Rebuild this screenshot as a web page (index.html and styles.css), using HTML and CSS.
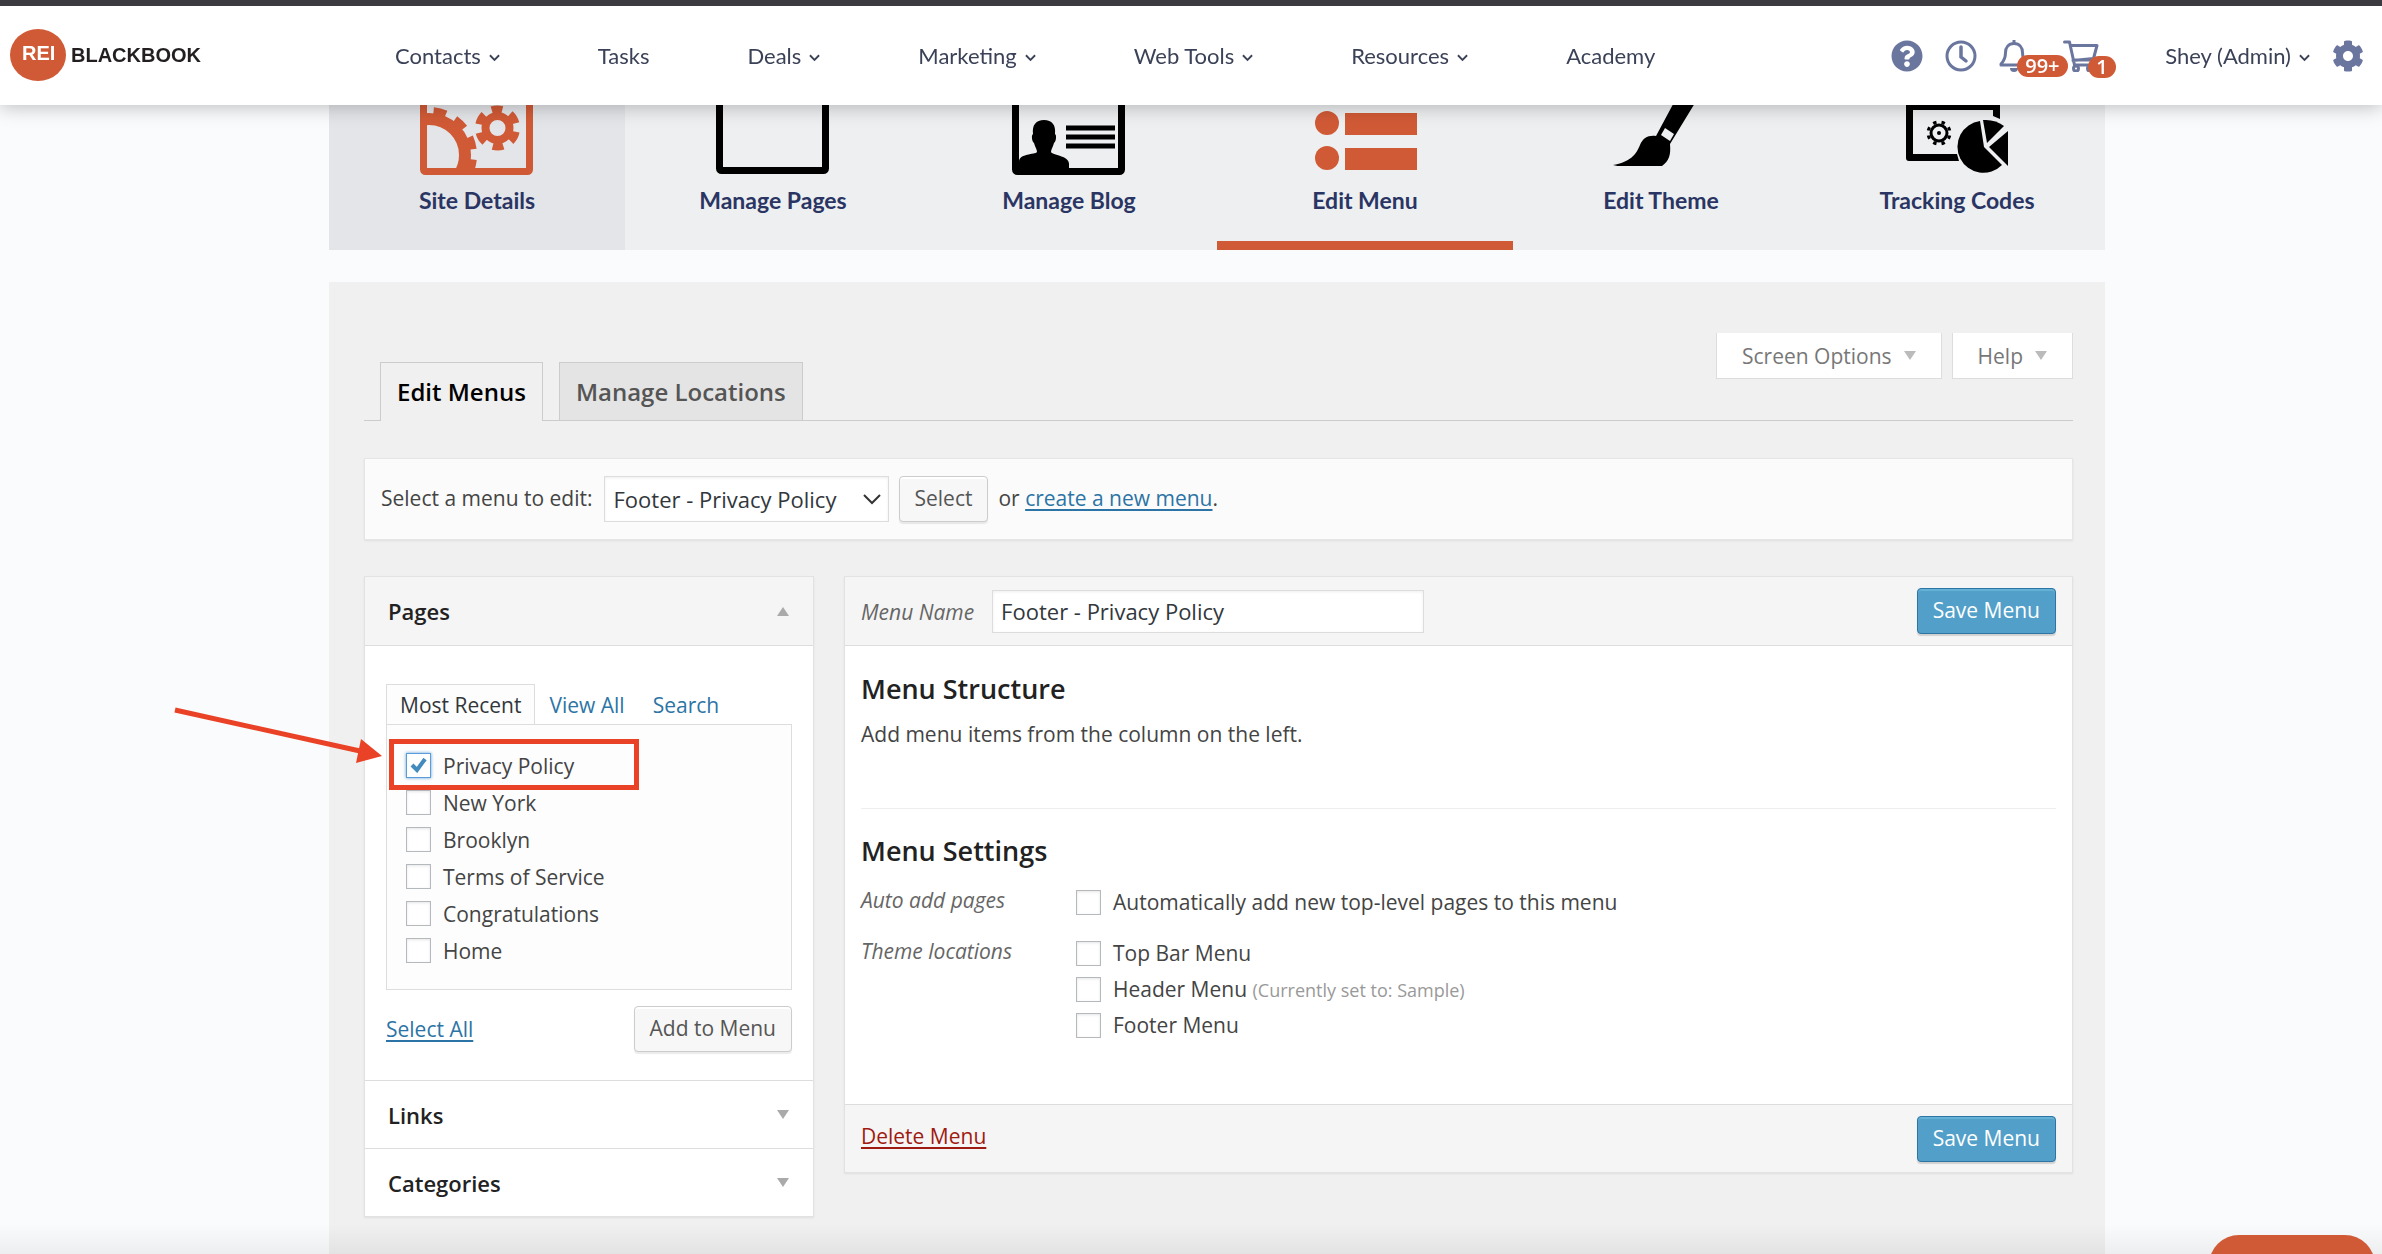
FILE: index.html
```html
<!DOCTYPE html>
<html lang="en">
<head>
<meta charset="utf-8">
<title>Edit Menus - REI BlackBook</title>
<link rel="stylesheet" href="styles.css">
</head>
<body>
<header class="topbar">
  <a class="logo" href="#"><span class="logo-mark">REI</span><span>BLACKBOOK</span></a>
  <nav class="main-nav">
    <a href="#">Contacts <svg class="chev" viewBox="0 0 12 8"><path d="M1 1l5 5 5-5"/></svg></a>
    <a href="#">Tasks</a>
    <a href="#">Deals <svg class="chev" viewBox="0 0 12 8"><path d="M1 1l5 5 5-5"/></svg></a>
    <a href="#">Marketing <svg class="chev" viewBox="0 0 12 8"><path d="M1 1l5 5 5-5"/></svg></a>
    <a href="#">Web Tools <svg class="chev" viewBox="0 0 12 8"><path d="M1 1l5 5 5-5"/></svg></a>
    <a href="#">Resources <svg class="chev" viewBox="0 0 12 8"><path d="M1 1l5 5 5-5"/></svg></a>
    <a href="#">Academy</a>
  </nav>
  <div class="tools">
    <a class="tool" href="#" aria-label="Help"><svg width="32" height="32" viewBox="0 0 512 512"><path fill="#6b769f" d="M504 256c0 137-111 248-248 248S8 393 8 256 119 8 256 8s248 111 248 248zM262.700 90c-54.500 0-89.300 23-116.500 63.800-3.500 5.300-2.400 12.400 2.700 16.300l34.700 26.300c5.200 3.900 12.600 3 16.700-2.100 17.900-22.700 30.100-35.800 57.300-35.800 20.400 0 45.700 13.100 45.700 33 0 15-12.400 22.700-32.500 34C247.100 238.500 216 254.900 216 296v4c0 6.600 5.400 12 12 12h56c6.600 0 12-5.400 12-12v-1.300c0-28.500 83.200-29.600 83.200-106.700 0-58-60.200-102-116.500-102zM256 338c-25.400 0-46 20.600-46 46s20.600 46 46 46 46-20.600 46-46-20.600-46-46-46z"/></svg></a>
    <a class="tool" href="#" aria-label="History"><svg width="32" height="32" viewBox="0 0 32 32" fill="none" stroke="#6b769f"><circle cx="16" cy="16" r="14" stroke-width="3"/><path d="M16 7v10l5 4" stroke-width="3.500" stroke-linecap="round"/></svg></a>
    <a class="tool bell" href="#" aria-label="Notifications"><svg width="30" height="32" viewBox="0 0 30 32"><path d="M15 3.500c-5.500 0-8.500 4-8.500 9 0 6-1.500 8.500-4.500 11.500v1h26v-1c-3-3-4.500-5.500-4.500-11.500 0-5-3-9-8.500-9z" fill="none" stroke="#6b769f" stroke-width="3" stroke-linejoin="round"/><path d="M15 0v4" stroke="#6b769f" stroke-width="3"/><path d="M11 28h8a4 4 0 0 1-8 0z" fill="#6b769f"/></svg><span class="badge">99+</span></a>
    <a class="tool cart" href="#" aria-label="Cart"><svg width="36" height="32" viewBox="0 0 36 32" fill="none" stroke="#6b769f" stroke-width="3" stroke-linecap="round" stroke-linejoin="round"><path d="M1.500 2h5l5 23h18M8 5.500h26l-3.500 13-20.500 2M10 20h20"/><circle cx="13" cy="28.500" r="2.500"/><circle cx="27" cy="28.500" r="2.500"/></svg><span class="badge">1</span></a>
    <a class="user" href="#">Shey (Admin) <svg class="chev" viewBox="0 0 12 8"><path d="M1 1l5 5 5-5"/></svg></a>
    <a class="tool" href="#" aria-label="Settings"><svg width="32" height="32" viewBox="0 0 512 512"><path fill="#6b769f" d="M487.400 315.700l-42.600-24.600c4.300-23.200 4.300-47 0-70.200l42.600-24.600c4.900-2.800 7.100-8.600 5.500-14-11.100-35.600-30-67.800-54.700-94.600-3.800-4.100-10-5.100-14.800-2.300L380.800 110c-17.900-15.400-38.500-27.300-60.800-35.100V25.800c0-5.600-3.900-10.500-9.400-11.700-36.700-8.200-74.300-7.800-109.200 0-5.500 1.200-9.400 6.100-9.400 11.700V75c-22.200 7.900-42.800 19.800-60.800 35.100L88.700 85.500c-4.900-2.800-11-1.900-14.800 2.300-24.700 26.700-43.600 58.900-54.700 94.600-1.700 5.400.6 11.200 5.500 14L67.300 221c-4.300 23.200-4.300 47 0 70.200l-42.600 24.600c-4.900 2.800-7.100 8.600-5.500 14 11.100 35.600 30 67.800 54.700 94.600 3.800 4.100 10 5.100 14.800 2.300l42.600-24.600c17.900 15.400 38.500 27.300 60.800 35.100v49.200c0 5.600 3.900 10.500 9.400 11.700 36.700 8.200 74.300 7.800 109.200 0 5.500-1.200 9.400-6.100 9.400-11.700v-49.200c22.200-7.900 42.800-19.800 60.800-35.100l42.600 24.600c4.900 2.800 11 1.900 14.800-2.300 24.700-26.700 43.600-58.900 54.700-94.600 1.500-5.500-.7-11.300-5.600-14.100zM256 336c-44.100 0-80-35.900-80-80s35.900-80 80-80 80 35.900 80 80-35.900 80-80 80z"/></svg></a>
  </div>
</header>

<main class="page">
  <nav class="tiles">
    <a class="tile tile-hover" href="#">
      <svg width="114" height="100" viewBox="0 0 114 100" fill="none" stroke="#d15a36">
        <clipPath id="frame"><path d="M4 4h105v92H4z"/></clipPath>
        <rect x="3.500" y="3.500" width="106" height="92" rx="2" stroke-width="7"/>
        <g clip-path="url(#frame)"><circle cx="9" cy="79" r="36" stroke-width="12"/><circle cx="9" cy="79" r="44" stroke-width="8" pathLength="240" stroke-dasharray="11 9" stroke-dashoffset="-4"/></g>
        <circle cx="77.500" cy="52" r="12" stroke-width="8"/><circle cx="77.500" cy="52" r="18.500" stroke-width="8" pathLength="120" stroke-dasharray="11 9" stroke-dashoffset="-4"/>
      </svg>
      <span>Site Details</span></a>
    <a class="tile" href="#">
      <svg width="114" height="100" viewBox="0 0 114 100" fill="none" stroke="#000"><rect x="3.500" y="3.500" width="106" height="91" rx="2" stroke-width="7"/></svg>
      <span>Manage Pages</span></a>
    <a class="tile" href="#">
      <svg width="114" height="100" viewBox="0 0 114 100"><rect x="3.500" y="3.500" width="106" height="92" rx="2" fill="none" stroke="#000" stroke-width="7"/><path d="M32 44c8 0 12 5 11 14 2 1 1 8-1 9-1 4-3 6-3 9 2 4 20 3 18 14v4H7V86c0-9 16-7 18-10 0-3-2-5-3-9-2-1-3-8-1-9-1-9 3-14 11-14z"/><path d="M54 52h49M54 61h49M54 70h49" stroke="#000" stroke-width="5"/></svg>
      <span>Manage Blog</span></a>
    <a class="tile tile-current" href="#">
      <svg width="114" height="100" viewBox="0 0 114 100" fill="#d15a36"><circle cx="19" cy="11" r="12"/><circle cx="19" cy="47" r="12"/><circle cx="19" cy="82" r="12"/><path d="M37 0h72v22H37zM37 37h72v22H37zM37 72h72v22H37z"/></svg>
      <span>Edit Menu</span></a>
    <a class="tile" href="#">
      <svg width="114" height="100" viewBox="0 0 114 100"><path d="M82 4L52 60c-8-1-13 2-16 9-4 10-10 17-27 20 3 1 6 1 9 1h40c7-5 9-11 8-22L105 4z"/><path d="M61 52l9 6-4 7-9-6z" fill="#edeff1"/></svg>
      <span>Edit Theme</span></a>
    <a class="tile" href="#">
      <svg width="114" height="100" viewBox="0 0 114 100"><path d="M6 0h94v43l-7-3V34H13v44h44l2 7H9q-3 0-3-3z"/><circle cx="39" cy="57" r="8" fill="none" stroke="#000" stroke-width="3"/><circle cx="39" cy="57" r="11" fill="none" stroke="#000" stroke-width="3" pathLength="80" stroke-dasharray="4 6" stroke-dashoffset="-3"/><circle cx="39" cy="57" r="2"/><path d="M80 45l4 26 18 18A26 26 0 1 1 80 45z"/><path d="M83 44q12-1 21 6L87 67z"/><path d="M108 55v35L89 71z"/></svg>
      <span>Tracking Codes</span></a>
  </nav>

  <section class="panel">
    <div class="meta-links">
      <button class="meta" type="button">Screen Options <i class="tri down"></i></button>
      <button class="meta" type="button">Help <i class="tri down"></i></button>
    </div>
    <nav class="tabs">
      <a class="tab tab-active" href="#">Edit Menus</a>
      <a class="tab" href="#">Manage Locations</a>
    </nav>

    <form class="chooser">
      <label for="menu-select">Select a menu to edit:</label>
      <select id="menu-select"><option>Footer - Privacy Policy</option></select>
      <button class="btn" type="button">Select</button>
      <span class="or">or <a href="#">create a new menu</a>.</span>
    </form>

    <div class="columns">
      <aside class="box accordion">
        <h3 class="acc-head acc-open">Pages <i class="tri up"></i></h3>
        <div class="acc-body">
          <div class="subtabs">
            <a class="subtab subtab-active" href="#">Most Recent</a>
            <a class="subtab" href="#">View All</a>
            <a class="subtab" href="#">Search</a>
          </div>
          <div class="page-list">
            <div class="first-page">
              <label class="check"><input type="checkbox" checked> Privacy Policy</label>
              <span class="highlight"></span>
              <svg class="arrow" width="210" height="58" viewBox="0 0 210 58"><path d="M1 3L186 44" stroke="#ea4226" stroke-width="5"/><path d="M187 32l21 17-26 7z" fill="#ea4226"/></svg>
            </div>
            <label class="check"><input type="checkbox"> New York</label>
            <label class="check"><input type="checkbox"> Brooklyn</label>
            <label class="check"><input type="checkbox"> Terms of Service</label>
            <label class="check"><input type="checkbox"> Congratulations</label>
            <label class="check"><input type="checkbox"> Home</label>
          </div>
          <div class="list-actions">
            <a href="#">Select All</a>
            <button class="btn" type="button">Add to Menu</button>
          </div>
        </div>
        <h3 class="acc-head">Links <i class="tri down"></i></h3>
        <h3 class="acc-head">Categories <i class="tri down"></i></h3>
      </aside>

      <form class="box editor">
        <div class="editor-bar">
          <label class="hint" for="menu-name">Menu Name</label>
          <input class="name" id="menu-name" type="text" value="Footer - Privacy Policy">
          <button class="btn primary" type="button">Save Menu</button>
        </div>
        <div class="editor-body">
          <h2>Menu Structure</h2>
          <p>Add menu items from the column on the left.</p>
          <hr>
          <h2>Menu Settings</h2>
          <div class="setting">
            <span class="hint">Auto add pages</span>
            <div><label class="check"><input type="checkbox"> Automatically add new top-level pages to this menu</label></div>
          </div>
          <div class="setting">
            <span class="hint">Theme locations</span>
            <div>
              <label class="check"><input type="checkbox"> Top Bar Menu</label>
              <label class="check"><input type="checkbox"> <span>Header Menu <small>(Currently set to: Sample)</small></span></label>
              <label class="check"><input type="checkbox"> Footer Menu</label>
            </div>
          </div>
        </div>
        <div class="editor-bar editor-foot">
          <a class="delete" href="#">Delete Menu</a>
          <button class="btn primary" type="button">Save Menu</button>
        </div>
      </form>
    </div>
  </section>
</main>
<div class="fade"></div>
<button class="chat" type="button" aria-label="Chat"></button>
</body>
</html>
```
FILE: styles.css
```css
* { box-sizing: border-box; }
body {
  margin: 0;
  background: #fafbfd;
  color: #444;
  font: 21px/28px "Open Sans", sans-serif;
}
button, input, select { font: inherit; color: inherit; margin: 0; }
svg { display: block; flex: none; }
a { color: #2c74a5; text-underline-offset: 3px; text-decoration-thickness: 2px; }
h2, h3, p { margin: 0; }

/* Header */
.topbar {
  position: fixed;
  inset: 0 0 auto 0;
  z-index: 5;
  height: 105px;
  padding: 0 18px 0 10px;
  display: flex;
  align-items: center;
  background: #fff;
  border-top: 6px solid #3b3a41;
  box-shadow: 0 2px 18px rgba(0, 0, 0, .25);
  font: 22px/28px Lato, sans-serif;
}
.topbar a { color: #3b4257; text-decoration: none; }
.topbar .logo {
  display: flex;
  align-items: center;
  gap: 5px;
  width: 385px;
  padding-bottom: 2px;
  color: #231f20;
  font: bold 20px/26px "Liberation Sans", sans-serif;
}
.logo-mark {
  width: 56px;
  height: 52px;
  padding-left: 12px;
  border-radius: 50%;
  background: #d15a36;
  color: #fff;
  line-height: 48px;
}
.logo { line-height: 22px; }
.main-nav { display: flex; gap: 98px; }
.main-nav a, .user { display: flex; align-items: center; gap: 8px; white-space: nowrap; }
.chev { width: 11px; height: 8px; margin-top: 4px; fill: none; stroke: #3b4257; stroke-width: 2; }
.tools { display: flex; align-items: center; gap: 22px; margin-left: auto; }
.tool { position: relative; }
.cart { margin-left: 12px; }
.user { margin: 0 0 0 44px; }
.badge {
  position: absolute;
  left: 18px;
  top: 15px;
  padding: 0 8px;
  border-radius: 11px;
  background: #d15a36;
  color: #fff;
  font: 600 20px/22px "Open Sans", sans-serif;
}
.cart .badge { left: 25px; top: 16px; }

/* Section tiles */
.page {
  min-height: 100vh;
  padding: 0 277px 0 329px;
  display: flex;
  flex-direction: column;
  gap: 32px;
}
.tiles { display: grid; grid-template-columns: repeat(6, 1fr); background: #edeff1; }
.tile {
  min-height: 250px;
  padding-bottom: 36px;
  display: flex;
  flex-direction: column;
  align-items: center;
  justify-content: flex-end;
  gap: 10px;
  color: #2a3563;
  font: bold 23px/28px Lato, sans-serif;
  text-decoration: none;
}
.tile-hover { background: #e4e5e9; }
.tile-current { padding-bottom: 27px; border-bottom: 9px solid #d15a36; }

/* Panel */
.panel { flex: 1; padding: 51px 32px 36px 35px; background: #f0f0f0; }
.meta-links { display: flex; justify-content: flex-end; gap: 10px; }
.meta {
  height: 46px;
  padding: 0 25px;
  display: flex;
  align-items: center;
  gap: 12px;
  border: 1px solid #ddd;
  border-top: 0;
  background: #fff;
  color: #777;
}
.tri { width: 0; height: 0; border: 6px solid transparent; }
.tri.down { border-top: 9px solid #aaa; border-bottom: 0; }
.tri.up { border-bottom: 9px solid #aaa; border-top: 0; }
.meta .tri { border-top-color: #bbb; }

.tabs {
  display: flex;
  gap: 16px;
  margin-top: -17px;
  padding-left: 16px;
  border-bottom: 1px solid #ccc;
}
.tab {
  height: 58px;
  padding: 13px 16px 0;
  border: 1px solid #ccc;
  border-bottom: 0;
  background: #e4e4e4;
  color: #555;
  font-weight: 600;
  font-size: 24px;
  line-height: 32px;
  text-decoration: none;
}
.tab-active { height: 59px; margin-bottom: -1px; background: #f0f0f0; color: #000; }

.chooser {
  display: flex;
  align-items: center;
  margin-top: 37px;
  padding: 17px 16px;
  background: #fbfbfb;
  border: 1px solid #e5e5e5;
  box-shadow: 0 1px 2px rgba(0, 0, 0, .07);
}
.chooser label, .or { padding-bottom: 2px; }
.chooser select {
  width: 285px;
  height: 46px;
  margin: 0 10px 0 11px;
  padding: 0 9px;
  appearance: none;
  border: 1px solid #ddd;
  border-radius: 0;
  background: #fff url("data:image/svg+xml,%3Csvg xmlns='http://www.w3.org/2000/svg' width='18' height='11' fill='none' stroke='%23333' stroke-width='2'%3E%3Cpath d='M1 1l8 8 8-8'/%3E%3C/svg%3E") no-repeat right 7px center;
  box-shadow: inset 0 1px 3px rgba(0, 0, 0, .07);
  color: #32373c;
  font-size: 22px;
}
.or { margin-left: 10px; }
.btn {
  height: 46px;
  padding: 0 15px 2px;
  border: 1px solid #ccc;
  border-radius: 4px;
  background: #f7f7f7;
  box-shadow: inset 0 2px 1px #fff, 0 2px 1px rgba(0, 0, 0, .08);
  color: #555;
}
.primary {
  border-color: #2e74a5;
  background: #529fc9;
  box-shadow: inset 0 2px 1px rgba(120, 200, 230, .5), 0 2px 1px rgba(0, 0, 0, .15);
  color: #fff;
}

.columns { display: grid; grid-template-columns: 450px 1fr; gap: 30px; margin-top: 36px; align-items: start; }
.box { background: #fff; border: 1px solid #e2e2e2; box-shadow: 0 1px 2px rgba(0, 0, 0, .07); }

.acc-head {
  height: 68px;
  padding: 0 24px 0 23px;
  display: flex;
  align-items: center;
  justify-content: space-between;
  border-top: 1px solid #ddd;
  color: #222;
  font-size: 22px;
  font-weight: 600;
}
.acc-open { border-top: 0; border-bottom: 1px solid #ddd; background: #f5f5f5; height: 69px; }
.acc-body { padding: 38px 21px 28px; }
.subtabs { display: flex; }
.subtab { height: 40px; padding: 7px 14px; text-decoration: none; }
.subtab-active { margin-bottom: -1px; padding: 6px 13px; border: 1px solid #ddd; border-bottom: 0; background: #fdfdfd; color: #32373c; position: relative; }
.page-list { padding: 22px 19px 20px; border: 1px solid #ddd; background: #fdfdfd; }
.page-list .check { height: 37px; }
.first-page { position: relative; }
.highlight { position: absolute; left: -17px; top: -8px; width: 250px; height: 51px; border: 5px solid #ea4226; }
.arrow { position: absolute; left: -232px; top: -40px; }
.check { display: flex; align-items: center; gap: 12px; color: #444; }
.check input {
  width: 25px;
  height: 25px;
  appearance: none;
  border: 1px solid #b4b9be;
  background: #fff;
  box-shadow: inset 0 1px 3px rgba(0, 0, 0, .1);
}
.check input:checked {
  border-color: #5b9dd9;
  background: #fff url("data:image/svg+xml,%3Csvg xmlns='http://www.w3.org/2000/svg' width='17' height='15' fill='none' stroke='%23428bbf' stroke-width='4'%3E%3Cpath d='M2 7l5 5 8-11'/%3E%3C/svg%3E") no-repeat center;
  box-shadow: 0 0 3px #5b9dd9;
}
.list-actions { display: flex; align-items: center; justify-content: space-between; margin-top: 16px; }

.editor-bar {
  height: 69px;
  padding: 0 16px;
  display: flex;
  align-items: center;
  background: #f5f5f5;
  border-bottom: 1px solid #ddd;
}
.editor-foot { height: 68px; border-top: 1px solid #ddd; border-bottom: 0; }
.hint { padding-top: 2px; color: #666; font-style: italic; }
.name {
  width: 432px;
  height: 43px;
  margin-left: 18px;
  padding: 0 8px;
  border: 1px solid #ddd;
  background: #fff;
  box-shadow: inset 0 1px 3px rgba(0, 0, 0, .07);
  color: #32373c;
  font-size: 22px;
}
.editor-bar .btn { margin-left: auto; }
.editor-body { padding: 25px 16px 61px; }
h2 { color: #222; font-size: 27px; line-height: 36px; font-weight: 600; }
.editor-body p { margin-top: 13px; }
hr { margin: 60px 0 24px; border: 0; border-top: 1px solid #eee; }
.setting { display: grid; grid-template-columns: 215px 1fr; margin-top: 15px; }
.setting .check { height: 36px; }
small { color: #999; font-size: 18px; }
.delete { padding-bottom: 6px; color: #9f1a10; }

.fade { position: fixed; inset: auto 0 0 0; height: 30px; background: linear-gradient(rgba(0, 0, 0, 0), rgba(0, 0, 0, .05)); }
.chat { position: fixed; right: 7px; bottom: -41px; width: 166px; height: 60px; border: 0; border-radius: 30px; background: #d15a36; }
```
